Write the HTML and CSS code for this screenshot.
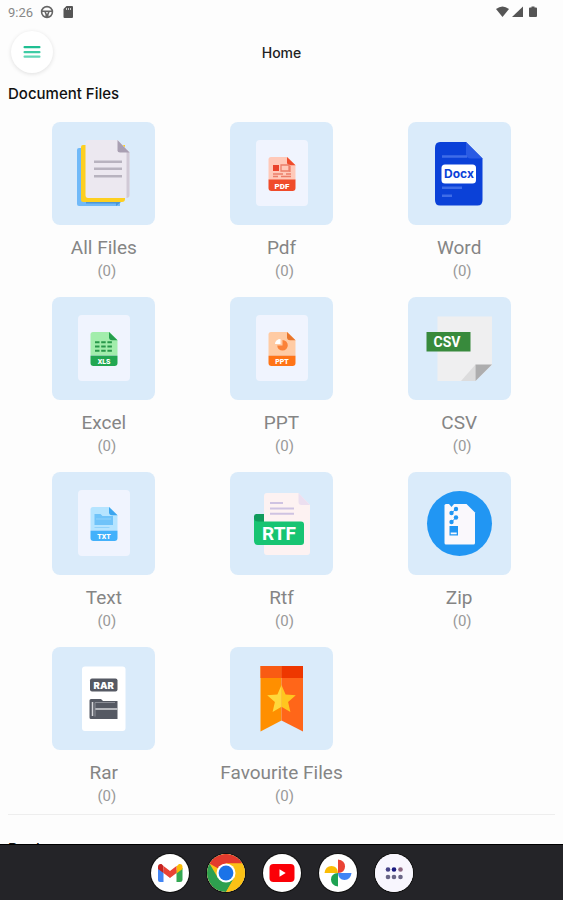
FILE: index.html
```
<!DOCTYPE html>
<html lang="en">
<head>
    <meta charset="UTF-8">
    <meta name="viewport" content="width=device-width, initial-scale=1.0">
    <title>Home</title>
    <link rel="stylesheet" href="styles.css">
</head>
<body>

    <div class="status">
        <span class="time">9:26</span>
        <svg width="14" height="14" viewBox="0 0 14 14" fill="none" stroke="#666" stroke-width="1.6">
            <circle cx="7" cy="7" r="5.4"/>
            <path d="M2 6.2h10M5 6.5l1.2 3v2.6M9 6.5l-1.2 3v2.6"/>
        </svg>
        <svg width="14" height="14" viewBox="0 0 14 14">
            <path d="M5.5 1H11q1 0 1 1v10q0 1-1 1H3.500q-1 0-1-1V4z" fill="#555"/>
            <path d="M5.500 3v2M7.500 3v2M9.500 3v2" stroke="#ccc"/>
        </svg>
        <svg class="signal" width="43" height="14" viewBox="0 0 43 14" fill="#555">
            <path d="M0 4Q6.500-1 13 4L6.500 12z"/>
            <path d="M27 1.500V12H16z"/>
            <path d="M35.500 1.500h3v1h1.500q1 0 1 1V11q0 1-1 1h-6q-1 0-1-1V3.500q0-1 1-1h1.500z"/>
        </svg>
    </div>

    <header class="topbar">
        <button class="menu" aria-label="Menu">
            <svg width="18" height="14" viewBox="0 0 18 14">
                <rect x="0.500" y="1" width="17" height="2.200" rx="1" fill="#1fbf92"/>
                <rect x="0.500" y="6" width="17" height="2.200" rx="1" fill="#3ecba4"/>
                <rect x="0.500" y="10.500" width="17" height="2.200" rx="1" fill="#62d6b6"/>
            </svg>
        </button>
        <h1 class="title">Home</h1>
    </header>

    <main class="content">
        <h2 class="section-title">Document Files</h2>
        <div class="files">
            <a class="file" href="#">
                <svg class="tile" viewBox="0 0 103 103">
                    <path d="M27 26h41v58H27q-2 0-2-2V28q0-2 2-2z" fill="#70b9f8"/>
                    <path d="M64 84l5-4H34v1.500h30z" fill="#4d96d4"/>
                    <path d="M31 23h42v54q0 3-3 3H31q-2 0-2-2V25q0-2 2-2z" fill="#fdcf20"/>
                    <path d="M36 18h30l11.500 12v43q0 3-3 3H36q-2.500 0-2.500-3V21q0-3 2.500-3z" fill="#ece8f0"/>
                    <path d="M74.500 28l3 2v43q0 3-3 3z" fill="#d1c9d6"/>
                    <path d="M65.500 18L77.500 30.500H68q-2.500 0-2.500-2z" fill="#a99fb2"/>
                    <path d="M42 39.700h28M42 46.700h28M42 54.300h28" stroke="#b8b3bf" stroke-width="2.500"/>
                </svg>
                <span class="name">All Files</span>
                <span class="count">(0)</span>
            </a>
            <a class="file" href="#">
                <svg class="tile" viewBox="0 0 103 103">
                    <rect x="26" y="18" width="52" height="66" rx="4" fill="#f0f4fe"/>
                    <path d="M41 35h16.500l8 8v15h-27V37.500q0-2.500 2.500-2.500z" fill="#ffc9b9"/>
                    <path d="M57 35l8.500 8.300H60q-3 0-3-3z" fill="#ee4b2c"/>
                    <path d="M43 43h6v6h-6z" fill="#e9432c"/>
                    <path d="M51 43h8v6h-8zM43 52h10M56 52h5M43 54.500h5M51 54.500h10M60 44v6" fill="none" stroke="#ec7d68" stroke-width="1.300"/>
                    <path d="M38.500 57.500h27V66q0 3-3 3h-21q-3 0-3-3z" fill="#f04b2a"/>
                    <text x="52" y="66.500" class="tag" font-size="8">PDF</text>
                </svg>
                <span class="name">Pdf</span>
                <span class="count">(0)</span>
            </a>
            <a class="file" href="#">
                <svg class="tile" viewBox="0 0 103 103">
                    <path d="M32 20h26l16.500 16.500V78q0 5.500-5 5.500H32q-5 0-5-5.500V26q0-6 5-6z" fill="#0b41d8"/>
                    <path d="M58 20l16.500 16.500H63q-5 0-5-5z" fill="#2a5be4"/>
                    <path d="M34 34.500h25M34 65.700h20M34 73.700h10" stroke="#3f6ce8" stroke-width="2.400"/>
                    <rect x="33.500" y="42.500" width="34.500" height="19" rx="3.500" fill="#fff"/>
                    <text x="51" y="56" class="docx" font-size="12">Docx</text>
                </svg>
                <span class="name">Word</span>
                <span class="count">(0)</span>
            </a>
            <a class="file" href="#">
                <svg class="tile" viewBox="0 0 103 103">
                    <rect x="26" y="18" width="52" height="66" rx="4" fill="#f0f4fe"/>
                    <path d="M41 35h16.500l8 8v15h-27V37.500q0-2.500 2.500-2.500z" fill="#a2edac"/>
                    <path d="M57 35l8.500 8.300H60q-3 0-3-3z" fill="#249e4d"/>
                    <path d="M43 45.300h17M43 49.500h17M43 53.700h17" stroke="#28984a" stroke-width="2" stroke-dasharray="4.500 1.700"/>
                    <path d="M38.500 58.500h27V66q0 3-3 3h-21q-3 0-3-3z" fill="#22a751"/>
                    <text x="52" y="66.500" class="tag" font-size="7">XLS</text>
                </svg>
                <span class="name">Excel</span>
                <span class="count">(0)</span>
            </a>
            <a class="file" href="#">
                <svg class="tile" viewBox="0 0 103 103">
                    <rect x="26" y="18" width="52" height="66" rx="4" fill="#f0f4fe"/>
                    <path d="M41 35h16.500l8 8v15h-27V37.500q0-2.500 2.500-2.500z" fill="#ffcba4"/>
                    <path d="M57 35l8.500 8.300H60q-3 0-3-3z" fill="#e8752c"/>
                    <path d="M52.500 48.500V43a5.300 5.300 0 1 1-5.300 5.500z" fill="#fb8238"/>
                    <path d="M50.500 47h-5.500a5.500 5 0 0 1 5.500-5z" fill="#fff"/>
                    <path d="M38.500 58.500h27V66q0 3-3 3h-21q-3 0-3-3z" fill="#ff7417"/>
                    <text x="52" y="66.500" class="tag" font-size="7">PPT</text>
                </svg>
                <span class="name">PPT</span>
                <span class="count">(0)</span>
            </a>
            <a class="file" href="#">
                <svg class="tile" viewBox="0 0 103 103">
                    <path d="M29.500 19.500H84V68L67.500 84h-38z" fill="#efeff0"/>
                    <path d="M53 84l14.500-16.500V84z" fill="#dcdcdd"/>
                    <path d="M67.500 67.500H84L67.500 84z" fill="#adadae"/>
                    <rect x="18.500" y="35" width="44" height="19.500" fill="#388a3c"/>
                    <text x="39" y="50" class="csv" font-size="14">CSV</text>
                </svg>
                <span class="name">CSV</span>
                <span class="count">(0)</span>
            </a>
            <a class="file" href="#">
                <svg class="tile" viewBox="0 0 103 103">
                    <rect x="26" y="18" width="52" height="66" rx="4" fill="#f0f4fe"/>
                    <path d="M41 35h16.500l8 8v15h-27V37.500q0-2.500 2.500-2.500z" fill="#b5e4ff"/>
                    <path d="M57 35l8.500 8.300H60q-3 0-3-3z" fill="#3ca5ef"/>
                    <path d="M42.500 42h6l2 2h10.500v9H42.500z" fill="#6fc3f9"/>
                    <path d="M44 47h15M42.500 55.500h15" stroke="#90d2fb"/>
                    <path d="M38.500 58.500h27V66q0 3-3 3h-21q-3 0-3-3z" fill="#43b1fb"/>
                    <text x="52" y="66.500" class="tag" font-size="7">TXT</text>
                </svg>
                <span class="name">Text</span>
                <span class="count">(0)</span>
            </a>
            <a class="file" href="#">
                <svg class="tile" viewBox="0 0 103 103">
                    <path d="M37 21h31.500L80 33v47q0 3-3 3H37q-3 0-3-3V24q0-3 3-3z" fill="#fdf2f2"/>
                    <path d="M68.500 21L80 33h-8.500q-3 0-3-3z" fill="#ecdff0"/>
                    <path d="M40 31h13M40 36.500h24M40 41.700h24" stroke="#cfc3e2" stroke-width="2"/>
                    <path d="M26.500 42H34v9H24v-6.500q0-2.500 2.500-2.500z" fill="#0f9b5c"/>
                    <path d="M24 47q1 2.500 4 2.500h43q3 0 3 3V70q0 3-3 3H28q-4 0-4-4z" fill="#17c472"/>
                    <text x="49" y="68" class="rtf" font-size="19">RTF</text>
                </svg>
                <span class="name">Rtf</span>
                <span class="count">(0)</span>
            </a>
            <a class="file" href="#">
                <svg class="tile" viewBox="0 0 103 103">
                    <circle cx="51.500" cy="51.500" r="32.500" fill="#2196f3"/>
                    <path d="M38 32h20.500L67 40.500V71q0 1.500-1.500 1.500H38q-1.500 0-1.500-1.500V33.500Q36.500 32 38 32z" fill="#faf8fc"/>
                    <g fill="#2196f3">
                        <path d="M41 32h5l-2.500 3z"/>
                        <circle cx="48" cy="37" r="2.200"/>
                        <circle cx="43.500" cy="41" r="2.200"/>
                        <circle cx="48" cy="45.500" r="2.200"/>
                        <circle cx="43.500" cy="50" r="2.200"/>
                        <path d="M43.500 41l4.500-4M43.500 50l4.500-4.500" stroke="#2196f3"/>
                        <path d="M41.500 54h8.500v9.500h-8.500zM42.700 60.500v1.800h6v-1.800z" fill-rule="evenodd"/>
                    </g>
                </svg>
                <span class="name">Zip</span>
                <span class="count">(0)</span>
            </a>
            <a class="file" href="#">
                <svg class="tile" viewBox="0 0 103 103">
                    <rect x="30" y="19.500" width="43.500" height="64.500" rx="3" fill="#fff"/>
                    <rect x="38" y="31.500" width="27.500" height="13" rx="2" fill="#555963"/>
                    <text x="51.700" y="41.500" class="rar" font-size="9.500">RAR</text>
                    <path d="M39 52h10l2 2h14.500v18H39q-1.500 0-1.500-1.500v-17Q37.500 52 39 52z" fill="#555963"/>
                    <path d="M40.500 55v14M43 62h22.500" stroke="#d5d6da" stroke-width="1.500"/>
                    <path d="M43 69.500V55.500h20" fill="none" stroke="#8c8f97"/>
                </svg>
                <span class="name">Rar</span>
                <span class="count">(0)</span>
            </a>
            <a class="file" href="#">
                <svg class="tile" viewBox="0 0 103 103">
                    <path d="M30.500 19h21v54.500l-21 11z" fill="#ff8f00"/>
                    <path d="M51.500 19h21.500v65.500l-21.500-11z" fill="#ff6619"/>
                    <path d="M30.500 19h21v12h-21z" fill="#f95b13"/>
                    <path d="M51.500 19H73v12H51.500z" fill="#ee3700"/>
                    <path d="M51.500 38l4.100 9.400 10.200.9-7.700 6.700 2.300 10-8.900-5.300z" fill="#ffc61f"/>
                    <path d="M51.500 38l-4.100 9.400-10.200.9 7.700 6.700-2.300 10 8.900-5.300z" fill="#ffd93b"/>
                </svg>
                <span class="name">Favourite Files</span>
                <span class="count">(0)</span>
            </a>
        </div>
        <h2 class="section-title next">Books</h2>
    </main>

    <nav class="dock">
        <button class="app" aria-label="Gmail">
            <svg viewBox="0 0 38 38">
                <path d="M7 14v12q0 2 2 2h3.500V16z" fill="#4285f4"/>
                <path d="M25.500 16v12H29q2.500 0 2.500-2V14z" fill="#34a853"/>
                <path d="M25.500 12.500v7l6-4.500v-2q0-3.500-3.500-3z" fill="#fbbc04"/>
                <path d="M7 15v-2q0-3.500 3.500-3l2 2v7z" fill="#c5221f"/>
                <path d="M12.500 19v-7l6.500 5 6.500-5v7L19 24z" fill="#ea4335"/>
            </svg>
        </button>
        <button class="app" aria-label="Chrome">
            <svg viewBox="0 0 38 38">
                <circle cx="19" cy="19" r="19" fill="#fbc116"/>
                <path d="M19 19L2.500 9.500A19 19 0 0 1 35.500 9.500H19z" fill="#e33b2e"/>
                <path d="M2.500 9.500A19 19 0 0 0 19 38l8.200-14.200L19 19l-8.200 4.800z" fill="#2ea04f"/>
                <path d="M35.500 9.500H19l8.200 14.300L19 38A19 19 0 0 0 35.500 9.500z" fill="#fbc116"/>
                <circle cx="19" cy="19" r="9.500" fill="#fff"/>
                <circle cx="19" cy="19" r="7.400" fill="#1a73e8"/>
            </svg>
        </button>
        <button class="app" aria-label="YouTube">
            <svg viewBox="0 0 38 38">
                <rect x="6.500" y="10" width="25" height="18" rx="4" fill="#fb0007"/>
                <path d="M16.500 15.300l6.200 3.700-6.200 3.700z" fill="#fff"/>
            </svg>
        </button>
        <button class="app" aria-label="Photos">
            <svg viewBox="0 0 38 38">
                <path d="M19 19V5.500q7 1 7 7T19 19z" fill="#ea4335"/>
                <path d="M19 19h13.500q-1 7-7 7T19 19z" fill="#4285f4"/>
                <path d="M19 19v13.500q-7-1-7-7T19 19z" fill="#1fa352"/>
                <path d="M19 19H5.500q1-7 7-7T19 19z" fill="#fbbc04"/>
            </svg>
        </button>
        <button class="app" aria-label="All apps">
            <svg viewBox="0 0 38 38" fill="#6a6687">
                <rect width="38" height="38" fill="#f8f6fe"/>
                <circle cx="13" cy="15.500" r="2.300" fill="#474488"/>
                <circle cx="19" cy="15.500" r="2.300" fill="#1a1a80"/>
                <circle cx="25.500" cy="15.500" r="2.300" fill="#8b6580"/>
                <circle cx="13" cy="23" r="2.300"/>
                <circle cx="19" cy="23" r="2.300"/>
                <circle cx="25.500" cy="23" r="2.300"/>
            </svg>
        </button>
    </nav>

</body>
</html>
```
FILE: styles.css
```
* {
    box-sizing: border-box;
}
body {
    margin: 0;
    height: 100vh;
    display: flex;
    flex-direction: column;
    overflow: hidden;
    background-color: #fdfdfd;
    font-family: Roboto, "Liberation Sans", sans-serif;
}
.status {
    display: flex;
    align-items: center;
    gap: 7px;
    height: 24px;
    padding: 0 24px 0 8px;
}
.time {
    font-size: 13px;
    color: #888;
}
.signal {
    margin-left: auto;
}
.topbar {
    display: grid;
    grid-template-columns: 42px 1fr 42px;
    align-items: center;
    height: 56px;
    padding: 0 11px;
}
.menu {
    display: flex;
    align-items: center;
    justify-content: center;
    width: 42px;
    height: 42px;
    padding: 0;
    border: none;
    border-radius: 50%;
    background-color: #fff;
    box-shadow: 0 1px 4px rgba(0, 0, 0, 0.12);
}
.title {
    margin: 0;
    text-align: center;
    font-family: Inter, "Liberation Sans", sans-serif;
    font-size: 14px;
    font-weight: 500;
    color: #222;
}
.content {
    flex: 1;
    min-height: 0;
    overflow: hidden;
    padding: 0 8px;
}
.section-title {
    margin: 0;
    font-family: Inter, "Liberation Sans", sans-serif;
    font-size: 15px;
    line-height: 28px;
    font-weight: 500;
    color: #111;
}
.files {
    display: grid;
    grid-template-columns: repeat(3, 1fr);
    row-gap: 16px;
    padding: 14px 7px 8px;
    border-bottom: 1px solid #eee;
}
.next {
    padding-top: 20px;
}
.file {
    display: flex;
    flex-direction: column;
    align-items: center;
    text-decoration: none;
    color: #858585;
}
.tile {
    width: 103px;
    height: 103px;
    border-radius: 8px;
    background-color: #daebfa;
}
.name {
    margin-top: 10px;
    font-size: 19px;
    line-height: 26px;
    white-space: nowrap;
}
.count {
    padding-left: 6px;
    font-size: 15px;
    line-height: 20px;
    color: #999;
}
.tile text {
    font-family: Roboto, "Liberation Sans", sans-serif;
    font-weight: 900;
    text-anchor: middle;
    fill: #fff;
}
.tile .docx {
    font-family: Inter, "Liberation Sans", sans-serif;
    font-weight: 700;
    fill: #0b41d8;
}
.tile .csv {
    font-weight: 700;
}
.tile .rtf {
    font-weight: 700;
}
.tile .rar {
    font-family: Inter, "Liberation Sans", sans-serif;
}
.dock {
    display: flex;
    align-items: center;
    justify-content: center;
    gap: 18px;
    height: 56px;
    border-top: 1px solid #000;
    background-color: #242428;
}
.app {
    width: 38px;
    height: 38px;
    padding: 0;
    border: none;
    border-radius: 50%;
    overflow: hidden;
    background-color: #fff;
    box-shadow: 0 0 0 1px #111;
}
.app svg {
    display: block;
    width: 38px;
    height: 38px;
}
```
